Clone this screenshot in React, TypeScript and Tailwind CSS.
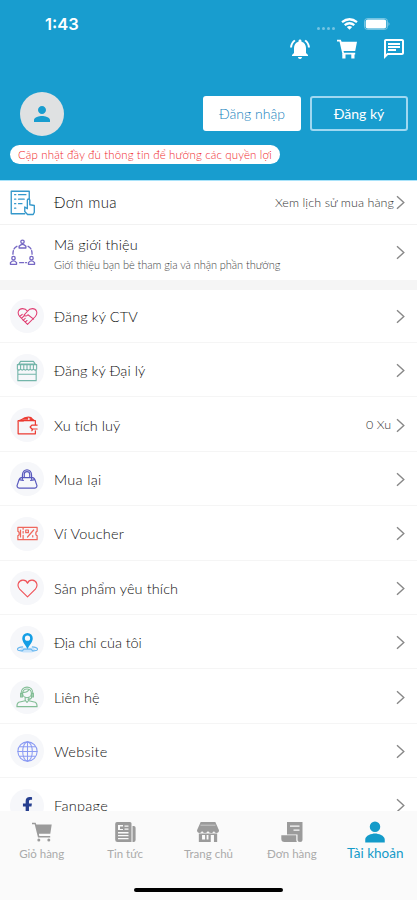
import React from "react";
import { MdNotificationsActive, MdOutlineChat, MdPerson } from "react-icons/md";
import { IoPersonSharp } from "react-icons/io5";
import { FaFacebookF } from "react-icons/fa";

type IconProps = { className?: string };

const Line = ({ className = "", children }: { className?: string; children: React.ReactNode }) => (
  <svg viewBox="0 0 24 24" fill="none" stroke="currentColor" strokeWidth="1.2" strokeLinecap="round" strokeLinejoin="round" className={className}>
    {children}
  </svg>
);

const Chevron = () => (
  <svg viewBox="0 0 9 15" className="h-[15px] w-[9px] shrink-0 text-[#888]" fill="none" stroke="currentColor" strokeWidth="1.4">
    <path d="M1 1.2 7.8 7.5 1 13.8" />
  </svg>
);

const Cart = ({ className }: IconProps) => (
  <svg viewBox="0 0 20 20" className={className} fill="currentColor">
    <path d="M0 .8h3.800l.8 2H20l-1.800 9.200H6.500l.5 1.800h11.200v1.700H5.500L2.500 2.600H0z" />
    <path d="M5.300 15h3.200v4.500H5.300zM14.300 15h3.200v4.500h-3.200z" />
  </svg>
);

const TabCart = ({ className }: IconProps) => (
  <svg viewBox="0 0 20 20" className={className} fill="currentColor">
    <path d="M0 .8h3.600l.7 1.700h15.400l-1.400 9.300H6.900l.4 2.300h10.900v1.300H6L2.700 2.200H0z" />
    <circle cx="6.800" cy="18" r="1.500" />
    <circle cx="16.800" cy="18" r="1.500" />
  </svg>
);

const News = ({ className }: IconProps) => (
  <svg viewBox="0 0 21 20" className={className} fill="currentColor">
    <path fillRule="evenodd" d="M2 0h13a1.500 1.500 0 0 1 1.500 1.500V20H2.500A2.300 2.300 0 0 1 .2 17.700V2A2 2 0 0 1 2 0zm1 3v5h5V3zm6.500.5v1.300h4V3.500zm0 3v1.300h4V6.500zM3 10v1.500h10.500V10zm0 3v1.300h10.500V13zm0 3v1.300h10.500V16z" />
    <path d="M5 4.500h3V7H5zM17.500 4h1.300A1.800 1.800 0 0 1 20.600 5.800V18a2 2 0 0 1-2 2h-1.100z" />
  </svg>
);

const Store = ({ className }: IconProps) => (
  <svg viewBox="0 0 24 20" preserveAspectRatio="none" className={className} fill="currentColor">
    <path d="M4 0h16l4 8.200c0 1.800-1 2.800-2.700 2.800S19 10.200 18.500 9c-.8 1.400-1.700 2-3.200 2S12.700 10.300 12 9c-.7 1.300-1.800 2-3.300 2S6.200 10.300 5.500 9C5 10.200 4 11 2.700 11S0 10 0 8.200z" />
    <path fillRule="evenodd" d="M2 11.500h20V20H2zm3.500 1.500v4.500h3.300V13zm5 0v4.500h2V13zm4.500 0v7h3.500v-7z" />
    <path d="M3.800 3.200h16.400" stroke="#fafafa" strokeWidth=".5" />
  </svg>
);

const Order = ({ className }: IconProps) => (
  <svg viewBox="0 0 22 20" className={className} fill="currentColor">
    <path fillRule="evenodd" d="M6 0h15.500v17.500A2.500 2.500 0 0 1 19 20a2.500 2.500 0 0 1-2.500-2.500V12.500H6zm3 3.500v1.300h9.500V3.500zm3.500 4v1.300h6V7.500z" />
    <path d="M.3 13.300h15V18c0 .8.200 1.500.6 2H3.500A3.200 3.200 0 0 1 .3 16.800z" />
  </svg>
);

const PurchaseIcon = () => (
  <Line className="h-[27px] w-[27px] text-[#3598cb]">
    <path d="M14 22H2V2h16v8M5 5h1M8.500 5H15M5 9h1M8.500 9h5M5 13h1M8.500 13h3M5 17h1" />
    <path fill="#fff" d="M14 20v-4l2.300 1.500V10a1.100 1.100 0 0 1 2.200 0v4l4 .7v6l-1 2h-5z" />
  </Line>
);

const ReferralIcon = () => (
  <Line className="h-[27px] w-[27px] text-[#7668c4]">
    <circle cx="12" cy="2.500" r="1.500" />
    <path d="M9 8V6.500Q12 3 15 6.500V8z" />
    <circle cx="4" cy="17" r="1.500" />
    <path d="M1.300 22.500V21Q4 18 6.700 21v1.500z" />
    <circle cx="20" cy="17" r="1.500" />
    <path d="M17.300 22.500V21q2.700-3 5.400 0v1.500z" />
    <path strokeDasharray="3.500 1.800" d="M7 6.500Q3.500 8 3.500 13.500M17 6.500q3.500 1.500 3.500 7M9.500 21h6" />
  </Line>
);

const HandsHeart = () => (
  <Line className="h-[21px] w-[21px] text-[#e03b70]">
    <path d="M12 21 3 12C-.5 7.500 2 3 6.300 3 9 3 11 4.500 12 6c1-1.500 3-3 5.700-3C22 3 24.500 7.500 21 12zM12 6 8 10.500c1.500 1.500 3.300 1 4.500-.5l6.500 5M3 12l3-2.500M5 14l3-2.500M7 16.500l2.500-2.500M9.500 18.500l2-2" />
  </Line>
);

const Shop = () => (
  <Line className="h-[22px] w-[22px] text-[#73b5a9]">
    <path d="M5 1.500h14l2 3H3zM1.500 5h21v5q-1.700 2-3.500 0-1.700 2-3.500 0-1.700 2-3.500 0-1.700 2-3.500 0-1.700 2-3.500 0-1.700 2-3.500 0zM2 11v11.500h20V11M2 15.500h20M5 5v4.500M8.500 5v4.500M12 5v4.500M15.500 5v4.500M19 5v4.500" />
  </Line>
);

const Wallet = () => (
  <Line className="h-[21px] w-[21px] text-[#ec3b32]">
    <path strokeWidth="1.400" d="M21 11V6.500H2.500C1 6 1 7 1.300 8v13.500H21V18M23 11.500h-6l-2 2.200 2 2.300h6M18 16l-1 2M4 6q7-5 12-3l3 3.500" />
    <path strokeWidth="2" d="M3 6.500h4M8 4.500h4M15 4.500l4 1.500" />
  </Line>
);

const Bag = () => (
  <Line className="h-[22px] w-[22px] text-[#5757bd]">
    <path strokeWidth="1.300" d="M6 10.500C3 10.500 3.500 13 1.500 18c-1 2 .2 4 2 4h17c1.800 0 3-2 2-4-2-5-1.500-7.500-4.500-7.500zM7 12V8c0-8 10-8 10 0v4M9 10V7c0-4 6-4 6 0v3M4.500 13l3.500.5M19.500 13l-3.500.5" />
  </Line>
);

const Voucher = () => (
  <Line className="h-[21px] w-[21px] text-[#ef675d]">
    <path strokeWidth="1.400" d="M1 5h22v4.500c-2 0-2 5 0 5V19H1v-4.500c2 0 2-5 0-5zM7 5v2M7 9.500v2M7 14v5M4 8v8M19 8l-7 8M18 14.500v1.500M10 8h3v3h-3z" />
  </Line>
);

const Heart = () => (
  <Line className="h-[21px] w-[21px] text-[#f05258]">
    <path strokeWidth="1.300" d="M12 21.500 3 12.700C-.3 9 1 3 6.500 2.500 9.500 2.300 11.300 4 12 6c.7-2 2.500-3.700 5.500-3.500C23 3 24.300 9 21 12.700z" />
  </Line>
);

const Place = () => (
  <svg viewBox="0 0 24 24" className="h-[21px] w-[21px]">
    <path fill="#c6e3fb" d="M5 18h14l3 3-5 2.500H7L2 21z" />
    <path fill="none" stroke="#69b7ef" strokeWidth="1.300" d="M7 17c-9 1-8 4.500-1 4.500l2-2h8l2 2c7 0 8-3.500-1-4.500" />
    <path fill="#149ee5" fillRule="evenodd" d="M12 19.500c-2-4.500-6-8-6-12.500a6 6 0 0 1 12 0c0 4.500-4 8-6 12.500zM12 4a3 3 0 1 0 0 6 3 3 0 0 0 0-6z" />
  </svg>
);

const Agent = () => (
  <Line className="h-[22px] w-[22px] text-[#82bd95]">
    <circle cx="12" cy="8" r="4.800" />
    <path d="M5.500 11V8c0-9 13-9 13 0v3M5 8h2v4H5zM17 8h2v4h-2zM8 7c3 0 5-1 6-3M10 12.500v3l2 2.500 2-2.500v-3M10 16l-7 1.700Q1 18.500 1 22.500h22q0-4-2-4.800L14 16M17 12c0 2-2 2.500-4 2.500" />
  </Line>
);

const Globe = () => (
  <Line className="h-[21px] w-[21px] text-[#8b9bf3]">
    <circle cx="12" cy="12" r="11" />
    <ellipse cx="12" cy="12" rx="5.500" ry="11" />
    <path d="M12 1v22M1 12h22M3 6.500h18M3 17.500h18" />
  </Line>
);

const items: { label: string; icon: React.ReactNode; value?: string; spacing: string }[] = [
  { label: "Đăng ký CTV", icon: <HandsHeart />, spacing: "tracking-[0.1px]" },
  { label: "Đăng ký Đại lý", icon: <Shop />, spacing: "tracking-[0.05px]" },
  { label: "Xu tích luỹ", icon: <Wallet />, value: "0 Xu", spacing: "tracking-[0.05px]" },
  { label: "Mua lại", icon: <Bag />, spacing: "tracking-[0.3px]" },
  { label: "Ví Voucher", icon: <Voucher />, spacing: "tracking-[0.2px]" },
  { label: "Sản phẩm yêu thích", icon: <Heart />, spacing: "tracking-[0.1px]" },
  { label: "Địa chỉ của tôi", icon: <Place />, spacing: "tracking-[-0.1px]" },
  { label: "Liên hệ", icon: <Agent />, spacing: "tracking-[0px]" },
  { label: "Website", icon: <Globe />, spacing: "tracking-[0.3px]" },
  { label: "Fanpage", icon: <FaFacebookF className="h-[17px] w-[17px] text-[#263f8f]" />, spacing: "tracking-[0.3px]" },
];

const tabs = [
  { label: "Giỏ hàng", icon: <TabCart className="h-5 w-5" /> },
  { label: "Tin tức", icon: <News className="h-5 w-[21px]" /> },
  { label: "Trang chủ", icon: <Store className="h-5 w-[22px]" /> },
  { label: "Đơn hàng", icon: <Order className="h-5 w-[22px]" /> },
  { label: "Tài khoản", icon: <IoPersonSharp className="h-6 w-6" />, active: true },
];

export default function App() {
  return (
    <div className="flex h-[900px] w-[417px] flex-col overflow-hidden bg-white font-['Lato',sans-serif] font-light text-[#111]">
      <header className="flex h-[181px] shrink-0 flex-col border-b border-[#a9e3fa] bg-[#189dcf] text-white">
        <div className="flex h-[37px] items-end justify-between pr-[27px] pb-[3px] pl-[45px]">
          <span className="font-['Inter',sans-serif] text-[16.5px] leading-5 font-semibold">1:43</span>
          <div className="flex h-5 items-center gap-1.5">
            <div className="mt-2 flex gap-[2px] opacity-40">
              <i className="h-[3px] w-[3px] rounded-full bg-white" />
              <i className="h-[3px] w-[3px] rounded-full bg-white" />
              <i className="h-[3px] w-[3px] rounded-full bg-white" />
              <i className="h-[3px] w-[3px] rounded-full bg-white" />
            </div>
            <svg viewBox="0 0 17 12" className="h-3 w-[17px]" fill="none" stroke="white" strokeWidth="2.300">
              <path d="M1 4.200q7.500-6 15 0M3.700 7.200q4.800-3.800 9.600 0" />
              <path d="m8.500 11.800-2.700-2.900q2.700-1.900 5.400 0z" fill="white" stroke="none" />
            </svg>
            <svg viewBox="0 0 26 12" className="h-3 w-[26px]">
              <rect x=".5" y=".5" width="23" height="11" rx="3" fill="none" stroke="white" strokeOpacity=".4" />
              <rect x="1.700" y="1.500" width="20.500" height="9" rx="2" fill="white" />
              <path d="M24.500 4v4q2-2 0-4z" fill="white" opacity=".5" />
            </svg>
          </div>
        </div>
        <div className="flex h-6 items-center justify-end gap-[25px] pr-[11px]">
          <MdNotificationsActive className="h-6 w-6" />
          <Cart className="h-5 w-5" />
          <MdOutlineChat className="h-6 w-6" />
        </div>
        <div className="mt-[30px] flex h-[45px] items-center pr-[9px] pl-5">
          <div className="flex h-11 w-11 items-center justify-center rounded-full bg-[#dfe1e2] text-[#189dcf]">
            <MdPerson className="h-6 w-6" />
          </div>
          <button className="ml-auto h-[35px] w-[98px] rounded-[3px] bg-white text-[14px] text-[#1482bd]">Đăng nhập</button>
          <button className="ml-[9px] h-[35px] w-[98px] rounded-[3px] border-2 border-[#9fd8f1] text-[14px] font-normal">Đăng ký</button>
        </div>
        <div className="mt-[9px] ml-[10px] flex h-[19px] w-[270px] items-center justify-center rounded-full bg-white text-[11.500px] tracking-[0.12px] whitespace-nowrap text-[#f0282d]">
          Cập nhật đầy đủ thông tin để hưởng các quyền lợi
        </div>
      </header>

      <section className="shrink-0">
        <div className="flex h-[44px] items-center border-b border-[#f2f2f2] pr-3 pl-[9px]">
          <PurchaseIcon />
          <span className="ml-[18px] text-[15px] tracking-[0.4px]">Đơn mua</span>
          <span className="mr-[2px] ml-auto pt-px text-[12.500px] tracking-[0.08px] text-[#333]">Xem lịch sử mua hàng</span>
          <Chevron />
        </div>
        <div className="flex h-[55px] items-center pr-3 pl-[9px]">
          <ReferralIcon />
          <div className="ml-[18px] flex flex-col pt-[4px]">
            <span className="text-[14.500px] leading-5 tracking-[0.15px]">Mã giới thiệu</span>
            <span className="text-[11px] leading-5 tracking-[-0.06px] text-[#444]">Giới thiệu bạn bè tham gia và nhận phần thưởng</span>
          </div>
          <div className="ml-auto"><Chevron /></div>
        </div>
        <div className="h-[10px] bg-[#f5f5f5]" />
      </section>

      <main className="min-h-0 flex-1 overflow-hidden">
        {items.map((item, i) => (
          <div key={item.label} className={`flex items-center border-b border-[#f5f5f5] pr-3 pl-[10px] ${i === 0 ? "h-[53px]" : "h-[54.4px] pt-[2px]"}`}>
            <div className="flex h-[34px] w-[34px] items-center justify-center rounded-full bg-[#f6f7fa]">{item.icon}</div>
            <span className={`ml-[10px] pt-px text-[14.500px] ${item.spacing}`}>{item.label}</span>
            {item.value && <span className="ml-auto text-[12.500px] text-[#333]">{item.value}</span>}
            <div className={item.value ? "ml-[5px]" : "ml-auto"}><Chevron /></div>
          </div>
        ))}
      </main>

      <nav className="flex h-[89px] shrink-0 flex-col items-center bg-[#fafafa]">
        <div className="grid h-[54px] w-full grid-cols-5 pt-[9px]">
          {tabs.map((tab) => (
            <div key={tab.label} className={`flex flex-col items-center ${tab.active ? "text-[#149bc9]" : "text-[#9b9b9b]"}`}>
              <div className="flex h-[23px] items-center justify-center">{tab.icon}</div>
              <span className={`font-normal whitespace-nowrap ${tab.active ? "text-[13.500px] leading-5" : "text-[11.500px] leading-[22px] text-[#aaa]"}`}>{tab.label}</span>
            </div>
          ))}
        </div>
        <div className="mt-[23px] h-[4px] w-[149px] rounded-full bg-black" />
      </nav>
    </div>
  );
}
